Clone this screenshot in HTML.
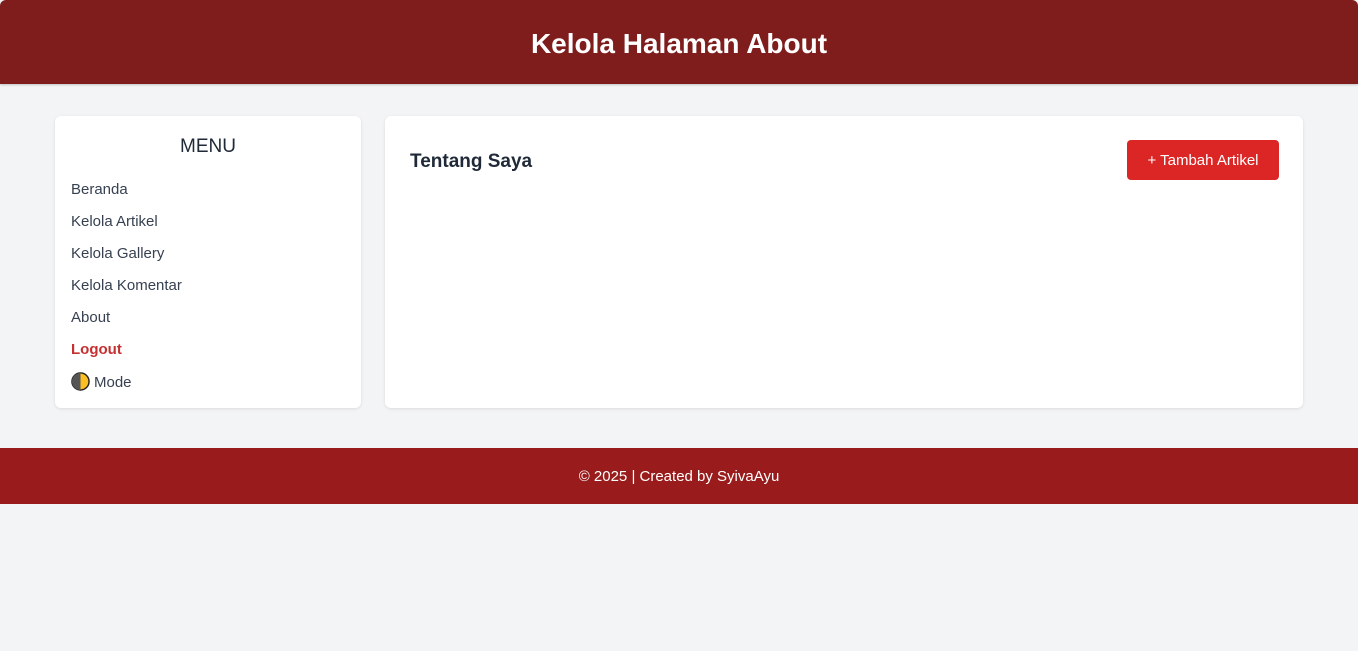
<!DOCTYPE html>
<html><head><style>
body{margin:0;background:#f3f4f6;font-family:"Liberation Sans",sans-serif;width:1358px;height:651px;overflow:hidden}
.hdr{position:absolute;left:0;top:0;width:1358px;height:84px;background:#7f1d1d;border-radius:6px 6px 0 0;color:#fff;text-align:center;font-weight:bold;font-size:28px;line-height:88px;box-shadow:0 1px 2px rgba(0,0,0,.2)}
.side{position:absolute;left:55px;top:116px;width:306px;height:292px;background:#fff;border-radius:6px;box-shadow:0 1px 3px rgba(0,0,0,.1)}
.side h3{margin:0;position:absolute;top:20px;width:100%;text-align:center;font-size:19px;font-weight:normal;color:#1f2937}
.side div.i{position:absolute;left:16px;font-size:15px;color:#374151}
.main{position:absolute;left:385px;top:116px;width:918px;height:292px;background:#fff;border-radius:6px;box-shadow:0 1px 3px rgba(0,0,0,.1)}
.main h2{position:absolute;left:25px;top:35px;margin:0;font-size:19px;color:#1f2937}
.btn{position:absolute;left:742px;top:24px;width:152px;height:40px;background:#dc2626;border-radius:4px;color:#fff;font-size:15px;text-align:center;line-height:42px}
.ftr{position:absolute;left:0;top:448px;width:1358px;height:56px;background:#991b1b;color:#fff;font-size:15px;text-align:center;line-height:57px}
</style></head><body>
<div class="hdr">Kelola Halaman About</div>
<div class="side"><h3>MENU</h3>
<div class="i" style="top:65px">Beranda</div>
<div class="i" style="top:97px">Kelola Artikel</div>
<div class="i" style="top:129px">Kelola Gallery</div>
<div class="i" style="top:161px">Kelola Komentar</div>
<div class="i" style="top:193px">About</div>
<div class="i" style="top:225px;color:#c53030;font-weight:bold">Logout</div>
<div class="i" style="top:256px"><svg width="19" height="19" viewBox="0 0 20 20" style="vertical-align:-4px;margin-right:4px"><circle cx="10" cy="10" r="9" fill="#fbbf24" stroke="#222" stroke-width="1.5"/><path d="M10 1A9 9 0 0 0 10 19Z" fill="#555"/></svg>Mode</div>
</div>
<div class="main"><h2>Tentang Saya</h2><div class="btn">+ Tambah Artikel</div></div>
<div class="ftr">© 2025 | Created by SyivaAyu</div>
</body></html>
